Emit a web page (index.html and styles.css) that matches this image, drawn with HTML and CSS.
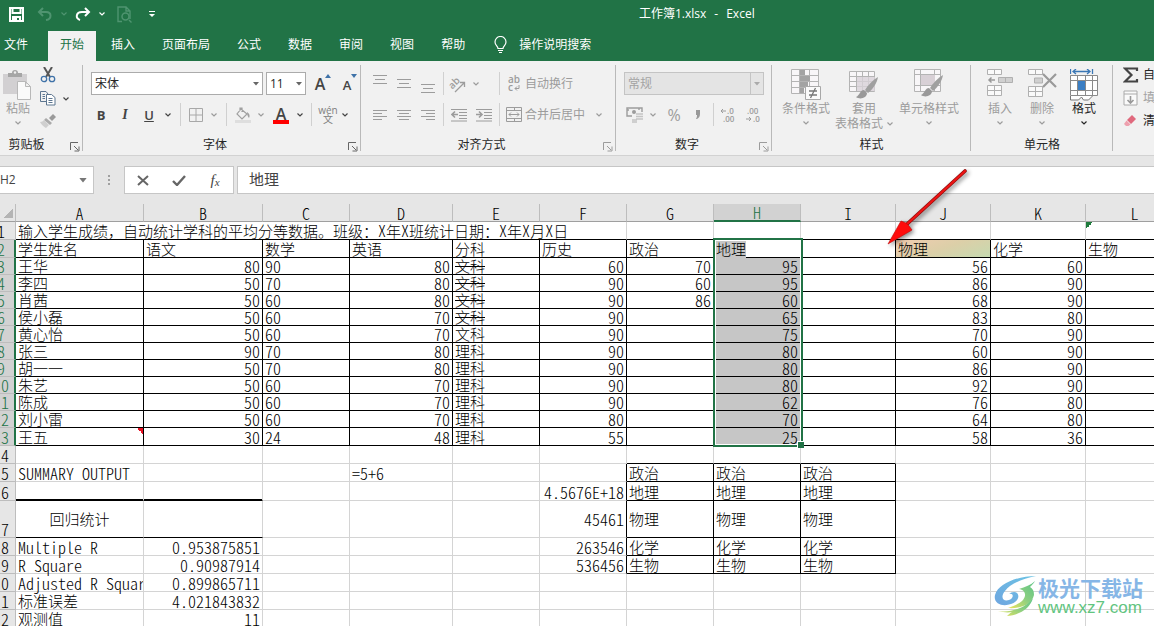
FILE: index.html
```html
<!DOCTYPE html>
<html lang="zh-CN">
<head>
<meta charset="utf-8">
<meta name="viewport" content="width=device-width, initial-scale=1">
<title>工作簿1.xlsx - Excel</title>
<link rel="stylesheet" href="styles.css">
</head>
<body>
<svg class="defs" width="0" height="0" aria-hidden="true">
  <symbol id="chev" viewBox="0 0 6 4"><path d="M.5 .5 3 3 5.500 .5" fill="none" stroke="currentColor" stroke-width="1.200"/></symbol>
  <symbol id="tri" viewBox="0 0 6 4"><path d="M0 0h6L3 3.500z" fill="currentColor"/></symbol>
  <symbol id="launch" viewBox="0 0 10 10"><path d="M.5 8V.5H8M4 4l4 4M9 4.500V9H4.500" fill="none" stroke="currentColor"/></symbol>
</svg>

<header class="top">
  <div class="titlebar">
    <div class="quick">
      <button class="w32" aria-label="保存"><svg width="15" height="15" viewBox="0 0 15 15"><path d="M1 1h13v13H1zM3.500 1v5h8V1M4 14v-4h7v4" fill="none" stroke="#fff" stroke-width="2"/><path d="M5 11h3v3H5z" fill="#fff"/></svg></button>
      <button class="w26 dim" aria-label="撤消"><svg width="16" height="14" viewBox="0 0 16 14"><path d="M6 1 2 5l4 4M2 5h7c6 0 6 7 0 8" fill="none" stroke="currentColor" stroke-width="2"/></svg></button>
      <button class="w12 dim" aria-label="撤消列表"><svg width="6" height="4"><use href="#chev"/></svg></button>
      <button class="w26" aria-label="恢复"><svg width="16" height="14" viewBox="0 0 16 14"><path d="M10 1l4 4-4 4M14 5H7C1 5 0 11 5 13" fill="none" stroke="#fff" stroke-width="2"/></svg></button>
      <button class="w12" aria-label="恢复列表"><svg width="6" height="4"><use href="#chev"/></svg></button>
      <button class="w32 dim" aria-label="打印预览"><svg width="15" height="17" viewBox="0 0 15 17"><path d="M5 15.500H1V1h8l4 4v8M9 1v4h4M12 14l2.500 2.500" fill="none" stroke="currentColor" stroke-width="1.400"/><circle cx="8.500" cy="10.500" r="3.500" fill="none" stroke="currentColor" stroke-width="1.500"/></svg></button>
      <button class="w24" aria-label="自定义快速访问工具栏"><svg width="6" height="7" viewBox="0 0 6 7"><path d="M0 .5h6" stroke="#fff"/><path d="M0 3h6L3 6z" fill="#fff"/></svg></button>
    </div>
    <h1 class="doc"><span>工作簿1.xlsx</span><span>-</span><span>Excel</span></h1>
  </div>
  <nav class="tabs">
    <button class="file">文件</button>
    <button class="active">开始</button>
    <button>插入</button>
    <button>页面布局</button>
    <button>公式</button>
    <button>数据</button>
    <button>审阅</button>
    <button>视图</button>
    <button>帮助</button>
    <button class="tell"><svg width="13" height="18" viewBox="0 0 13 18"><path d="M4 12.500c0-2.500-3-3-3-6.500a5.500 5.500 0 0 1 11 0c0 3.500-3 4-3 6.500zM4 14.500h5M5 16.500h3" fill="none" stroke="#fff" stroke-width="1.200"/></svg>操作说明搜索</button>
  </nav>
</header>

<section class="ribbon">
  <div class="group clip">
    <div class="body">
      <button class="big paste off"><svg width="30" height="32" viewBox="0 0 30 32"><path d="M0 5h24v10H14v10H0z" fill="#d2d0d2"/><path d="M5 8V4h4a3 3 0 0 1 6 0h4v4z" fill="#a6a6a6"/><circle cx="12" cy="3.500" r="1.200" fill="#f1f1f1"/><path d="M14.500 12.500h8l5 5v13h-13zM22.500 12.500v5h5" fill="#fafafa" stroke="#b8b8b8"/></svg><span>粘贴</span><svg class="end" width="6" height="4"><use href="#chev"/></svg></button>
      <div class="stack">
        <button aria-label="剪切"><svg width="16" height="16" viewBox="0 0 16 16"><path d="M4 0l6 10M12 0 6 10" stroke="#555" stroke-width="2" fill="none"/><circle cx="4" cy="12" r="2.700" fill="none" stroke="#3f72a8" stroke-width="1.300"/><circle cx="12" cy="12" r="2.700" fill="none" stroke="#3f72a8" stroke-width="1.300"/></svg></button>
        <button aria-label="复制"><svg width="16" height="15" viewBox="0 0 16 15"><path d="M6 10.500H.5V.5H6L8 3M2.500 3.500H5M2.500 5.500H5M2.500 7.500H5" fill="none" stroke="#5d7690"/><path d="M6.500 3.500h5l3.500 3v7.500H6.500zM8.500 7.500h4M8.500 9.500h4M8.500 11.500h4" fill="#fff" stroke="#5d7690"/></svg><svg class="copychev" width="6" height="4"><use href="#chev"/></svg></button>
        <button aria-label="格式刷"><svg width="16" height="14" viewBox="0 0 16 14"><path d="M9 4l4-4 3 3-4 4z" fill="#9a9a9a"/><path d="M6 4l6 5-2 2-6-5z" fill="#aaa"/><path d="M4 6l5 5-3 3c-2-1-5-4-6-6 2 0 3-1 4-2z" fill="#cfcfcf"/></svg></button>
      </div>
    </div>
    <div class="caption"><span>剪贴板</span><button aria-label="剪贴板选项"><svg width="10" height="10"><use href="#launch"/></svg></button></div>
  </div>

  <div class="group font">
    <div class="body rows">
      <div class="row boxes">
        <label class="combo name"><select aria-label="字体"><option>宋体</option></select><svg width="6" height="4"><use href="#tri"/></svg></label>
        <label class="combo size"><select aria-label="字号"><option>11</option></select><svg width="6" height="4"><use href="#tri"/></svg></label>
        <button class="w28 glyph" aria-label="增大字号"><span class="a16">A</span><svg class="sup" width="6" height="4" viewBox="0 0 6 4"><path d="M0 4h6L3 0z" fill="#3f72a8"/></svg></button>
        <button class="w20 glyph" aria-label="减小字号"><span class="a13">A</span><svg class="sup" width="6" height="4" viewBox="0 0 6 4"><path d="M0 0h6L3 4z" fill="#3f72a8"/></svg></button>
      </div>
      <div class="row">
        <button class="w24 bold">B</button><button class="w24 ital">I</button><button class="w24 under">U</button><button class="w14" aria-label="下划线列表"><svg width="6" height="4"><use href="#chev"/></svg></button>
        <i class="sep w10"></i>
        <button class="w22 off" aria-label="边框"><svg width="14" height="14" viewBox="0 0 14 14"><path d="M.5 .5h13v13H.5zM7 0v14M0 7h14" fill="none" stroke="#a8a8a8"/></svg></button><button class="w14 off" aria-label="边框列表"><svg width="6" height="4"><use href="#chev"/></svg></button>
        <i class="sep w10"></i>
        <button class="w24 off" aria-label="填充颜色"><svg width="16" height="16" viewBox="0 0 16 16"><path d="M6 2l6 5-5 5-5-5zM5 4V1h2v4" fill="none" stroke="#a0a0a0" stroke-width="1.200"/><path d="M12 5c3 2 3 4 2 6-1-1-2-3-2-6z" fill="#a0a0a0"/><path d="M0 13h16v3H0z" fill="#dedede"/></svg></button><button class="w12 off" aria-label="填充列表"><svg width="6" height="4"><use href="#chev"/></svg></button>
        <button class="w28 color" aria-label="字体颜色">A</button><button class="w10" aria-label="字体颜色列表"><svg width="6" height="4"><use href="#chev"/></svg></button>
        <i class="sep w12"></i>
        <button class="w22 wen"><span>wén</span><span>文</span></button><button class="w12" aria-label="拼音列表"><svg width="6" height="4"><use href="#chev"/></svg></button>
      </div>
    </div>
    <div class="caption"><span>字体</span><button aria-label="字体设置"><svg width="10" height="10"><use href="#launch"/></svg></button></div>
  </div>

  <div class="group align off">
    <div class="body rows">
      <div class="row boxes">
        <button class="w24" aria-label="顶端对齐"><svg width="14" height="20" viewBox="0 0 14 20"><path d="M0 1.500h14M2 5.500h10M0 9.500h14" stroke="currentColor"/></svg></button><button class="w24" aria-label="垂直居中"><svg width="14" height="20" viewBox="0 0 14 20"><path d="M0 5.500h14M2 9.500h10M0 13.500h14" stroke="currentColor"/></svg></button><button class="w24" aria-label="底端对齐"><svg width="14" height="20" viewBox="0 0 14 20"><path d="M0 10.500h14M2 14.500h10M0 18.500h14" stroke="currentColor"/></svg></button>
        <i class="sep w6"></i>
        <button class="w24" aria-label="方向"><svg width="18" height="18" viewBox="0 0 18 18"><text x="0" y="11" transform="rotate(-45 6 9)" class="ab">ab</text><path d="M6 17 15 8M11 7.500h4.500V12" fill="none" stroke="currentColor" stroke-width="1.300"/></svg></button><button class="w12" aria-label="方向列表"><svg width="6" height="4"><use href="#chev"/></svg></button>
        <i class="w14"></i><i class="sep w6"></i>
        <button class="cmd"><svg width="16" height="20" viewBox="0 0 16 20"><text x="2" y="9" class="ab">ab</text><text x="2" y="17" class="ab">c</text><path d="M13 11v3.500H9M11 12.500l-2 2 2 2" fill="none" stroke="currentColor"/></svg>自动换行</button>
      </div>
      <div class="row">
        <button class="w24" aria-label="左对齐"><svg width="14" height="14" viewBox="0 0 14 14"><path d="M0 2.500h14M0 5.500h9M0 8.500h14M0 11.500h9" stroke="currentColor"/></svg></button><button class="w24" aria-label="居中"><svg width="14" height="14" viewBox="0 0 14 14"><path d="M0 2.500h14M2 5.500h10M0 8.500h14M2 11.500h10" stroke="currentColor"/></svg></button><button class="w24" aria-label="右对齐"><svg width="14" height="14" viewBox="0 0 14 14"><path d="M0 2.500h14M5 5.500h9M0 8.500h14M5 11.500h9" stroke="currentColor"/></svg></button>
        <i class="sep w6"></i>
        <button class="w26" aria-label="减少缩进"><svg width="16" height="14" viewBox="0 0 16 14"><path d="M0 1.500h16M8 4.500h8M8 7.500h8M8 10.500h8M0 13h16" stroke="currentColor"/><path d="M7 6.500H1M4 3.500l-3 3 3 3" fill="none" stroke="currentColor" stroke-width="1.600"/></svg></button><button class="w24" aria-label="增加缩进"><svg width="16" height="14" viewBox="0 0 16 14"><path d="M0 1.500h16M8 4.500h8M8 7.500h8M8 10.500h8M0 13h16" stroke="currentColor"/><path d="M0 6.500h6M3 3.500l3 3-3 3" fill="none" stroke="currentColor" stroke-width="1.600"/></svg></button>
        <i class="sep w6"></i>
        <button class="cmd"><svg width="16" height="16" viewBox="0 0 16 16"><path d="M.5 .5h15v14H.5zM.5 3.500h15M.5 11.500h15M8.500 .5v3M8.500 11.500v3M3 7.500h10M5 5.500l-2 2 2 2M11 5.500l2 2-2 2" fill="none" stroke="currentColor"/></svg>合并后居中</button><button class="w28" aria-label="合并列表"><svg width="6" height="4"><use href="#chev"/></svg></button>
      </div>
    </div>
    <div class="caption"><span>对齐方式</span><button aria-label="对齐设置"><svg width="10" height="10"><use href="#launch"/></svg></button></div>
  </div>

  <div class="group number off">
    <div class="body rows">
      <div class="row boxes">
        <label class="combo format"><select aria-label="数字格式" disabled><option>常规</option></select><svg width="6" height="4"><use href="#tri"/></svg></label>
      </div>
      <div class="row">
        <button class="w22" aria-label="会计数字格式"><svg width="18" height="16" viewBox="0 0 18 16"><path d="M6 9H1V1h15v4M1 3h2M13 1v2" fill="none" stroke="currentColor" stroke-width="1.400"/><circle cx="8" cy="5" r="2" fill="currentColor"/><path d="M10 7h7M10 9.500h7M10 12h7M6 13h5M6 15h5" stroke="#c4c4c4" stroke-width="1.500"/></svg></button><button class="w14" aria-label="货币列表"><svg width="6" height="4"><use href="#chev"/></svg></button>
        <button class="w28 pct">%</button><button class="w20 comma" aria-label="千位分隔"><svg width="6" height="9" viewBox="0 0 6 9"><path d="M1 0h4v4c0 2-1 4-3 5H1c1-2 1-3 1-4H1z" fill="#999"/></svg></button>
        <i class="sep w10"></i>
        <button class="w20" aria-label="增加小数位数"><svg width="16" height="16" viewBox="0 0 16 16"><path d="M6 4H1M3 2 1 4l2 2" fill="none" stroke="currentColor"/><text x="7" y="7" class="dec">.0</text><text x="3" y="15" class="dec">.00</text></svg></button><button class="w30" aria-label="减少小数位数"><svg width="16" height="16" viewBox="0 0 16 16"><text x="2" y="7" class="dec">.00</text><path d="M1 12h5M4 10l2 2-2 2" fill="none" stroke="currentColor"/><text x="8" y="15" class="dec">.0</text></svg></button>
      </div>
    </div>
    <div class="caption"><span>数字</span><button aria-label="数字设置"><svg width="10" height="10"><use href="#launch"/></svg></button></div>
  </div>

  <div class="group styles off">
    <div class="body">
      <button class="big w52"><svg width="30" height="32" viewBox="0 0 30 32"><path d="M.5 .5h27v24H.5zM.5 6.500h27M.5 12.500h27M.5 18.500h27M8.500 .5v24M18.500 .5v24" fill="#f8f6f8" stroke="#b4b4b4"/><path d="M9 1h5v5H9zM9 7h10v5H9zM9 13h8v5H9zM9 19h4v5H9z" fill="#a3a3a3"/><path d="M14.500 17.500h15v13h-15z" fill="#fafafa" stroke="#a8a8a8"/><path d="M18 22h8M18 26h8M24.500 19l-5 10" stroke="#777" stroke-width="1.300"/></svg><span>条件格式</span><svg class="end" width="6" height="4"><use href="#chev"/></svg></button>
      <button class="big w64"><svg width="30" height="32" viewBox="0 0 30 32"><path d="M.5 2.500h25v20H.5zM.5 7.500h25M.5 12.500h25M.5 17.500h25M7.500 2.500v20M13.500 2.500v20M19.500 2.500v20" fill="#f8f6f8" stroke="#b4b4b4"/><path d="M8 8h18v14H8z" fill="#d8d2d8" opacity=".8"/><path d="M29 8c-5 3-10 8-13 13l3 3c5-4 9-10 10-16z" fill="#a0a0a0"/><path d="M15 21c-4 0-4 5-8 7 4 3 11 1 11-4z" fill="#999"/></svg><span>套用</span><span class="pair">表格格式<svg width="6" height="4"><use href="#chev"/></svg></span></button>
      <button class="big w66"><svg width="30" height="32" viewBox="0 0 30 32"><path d="M.5 .5h26v22H.5zM.5 5.500h26M.5 16.500h26M6.500 .5v22M20.500 .5v22" fill="#f8f6f8" stroke="#b4b4b4"/><path d="M7 6h14v10H7z" fill="#d8d0d6"/><path d="M29 6c-5 3-10 8-13 13l3 3c5-4 9-10 10-16z" fill="#a0a0a0"/><path d="M15 19c-4 0-4 5-8 7 4 3 11 1 11-4z" fill="#999"/></svg><span>单元格样式</span><svg class="end" width="6" height="4"><use href="#chev"/></svg></button>
    </div>
    <div class="caption"><span>样式</span></div>
  </div>

  <div class="group cells">
    <div class="body">
      <button class="big w42 off"><svg width="28" height="32" viewBox="0 0 28 32"><path d="M1.500 .5h14v5h-14zM8.500 .5v5M1.500 16.500h14v10h-14zM8.500 16.500v10M1.500 21.500h14" fill="#fafafa" stroke="#b0b0b0"/><path d="M12.500 8.500h14v5h-14zM19.500 8.500v5" fill="#d0d0d0" stroke="#b0b0b0"/><path d="M9 11H3M5.500 8.500 3 11l2.500 2.500" fill="none" stroke="#999" stroke-width="1.500"/></svg><span>插入</span><svg class="end" width="6" height="4"><use href="#chev"/></svg></button>
      <button class="big w42 off"><svg width="30" height="32" viewBox="0 0 30 32"><path d="M1.500 .5h14v5h-14zM8.500 .5v5M1.500 17.500h14v10h-14zM8.500 17.500v10M1.500 22.500h14" fill="#fafafa" stroke="#b0b0b0"/><path d="M7.500 9h8v5h-8z" fill="#d0d0d0" stroke="#b0b0b0"/><path d="M16 5l13 13M29 5 16 18" stroke="#9a9a9a" stroke-width="2.200"/></svg><span>删除</span><svg class="end" width="6" height="4"><use href="#chev"/></svg></button>
      <button class="big w42"><svg width="28" height="32" viewBox="0 0 28 32"><path d="M.5 0v5M22.500 0v5M3 2.500h17M6 0 3 2.500 6 5M17 0l3 2.500L17 5" fill="none" stroke="#3b77b5" stroke-width="1.300"/><path d="M.5 6.500h27v20H.5zM.5 11.500h27M.5 21.500h27M7.500 6.500v20M15.500 6.500v20M22.500 6.500v20" fill="#fff" stroke="#8a8a8a"/><path d="M8 12h7v9H8z" fill="#3b7fc4"/><path d="M.5 27v4h8l3-3 2 3h5l4-4" fill="#fff" stroke="#777"/></svg><span>格式</span><svg class="end" width="6" height="4"><use href="#chev"/></svg></button>
    </div>
    <div class="caption"><span>单元格</span></div>
  </div>

  <div class="group edit">
    <button><svg width="16" height="16" viewBox="0 0 16 16"><path d="M14 4V1.500H2L8.500 8 2 14.500h12V12" fill="none" stroke="#444" stroke-width="2.200"/></svg>自</button>
    <button class="off"><svg width="16" height="16" viewBox="0 0 16 16"><path d="M1 1h13v14H1zM1 4h13" fill="#fafafa" stroke="#aaa"/><path d="M7.500 6v7M4.500 10l3 3 3-3" fill="none" stroke="#999" stroke-width="1.600"/></svg>填</button>
    <button><svg width="16" height="16" viewBox="0 0 16 16"><path d="M9 2l4 4-5 5-4-4z" fill="#e0697d"/><path d="M3.500 7.500l4 4-2 1.500H3L1 11z" fill="#eea0ae"/></svg>清</button>
  </div>
</section>

<section class="formula">
  <div class="namebox"><input aria-label="名称框" value="H2"><svg width="8" height="5" viewBox="0 0 6 4"><use href="#tri"/></svg></div>
  <span class="grip"></span>
  <div class="fxbox">
    <button aria-label="取消"><svg width="12" height="11" viewBox="0 0 12 11"><path d="M1 1l10 9M11 1 1 10" stroke="#666" stroke-width="2"/></svg></button>
    <button aria-label="输入"><svg width="14" height="11" viewBox="0 0 14 11"><path d="M1 6l4 4L13 1" fill="none" stroke="#666" stroke-width="2.400"/></svg></button>
    <button class="fx" aria-label="插入函数">f<small>x</small></button>
  </div>
  <input class="entry" aria-label="编辑栏" value="地理">
</section>

<main class="sheet">
<table>
<colgroup><col class="c0"><col class="ca"><col class="cb"><col class="cs"><col class="cd"><col class="cs"><col class="cs"><col class="cs"><col class="cs"><col class="cm"><col class="cm"><col class="cm"><col class="cl"></colgroup>
<thead><tr><th class="corner"></th><th>A</th><th>B</th><th>C</th><th>D</th><th>E</th><th>F</th><th>G</th><th class="on">H</th><th>I</th><th>J</th><th>K</th><th>L</th></tr></thead>
<tbody>
<tr class="title"><th>1</th><td colspan="6">输入学生成绩，自动统计学科的平均分等数据。班级：<b>X</b>年<b>X</b>班统计日期：<b>X</b>年<b>X</b>月<b>X</b>日</td><td></td><td></td><td></td><td></td><td></td><td class="flag"></td></tr>
<tr class="data r18"><th>2</th><td>学生姓名</td><td>语文</td><td>数学</td><td>英语</td><td>分科</td><td>历史</td><td>政治</td><td class="cursor"><mark>地理</mark><span class="selection"></span></td><td></td><td class="tint">物理</td><td>化学</td><td>生物</td></tr>
<tr class="data"><th>3</th><td>王华</td><td class="n">80</td><td class="t">90</td><td class="n">80</td><td><s>文科</s></td><td class="n">60</td><td class="n">70</td><td class="n sel">95</td><td></td><td class="n">56</td><td class="n">60</td><td></td></tr>
<tr class="data"><th>4</th><td>李四</td><td class="n">50</td><td class="t">70</td><td class="n">80</td><td><s>文科</s></td><td class="n">90</td><td class="n">60</td><td class="n sel">95</td><td></td><td class="n">86</td><td class="n">90</td><td></td></tr>
<tr class="data"><th>5</th><td>肖茜</td><td class="n">50</td><td class="t">60</td><td class="n">80</td><td><s>文科</s></td><td class="n">90</td><td class="n">86</td><td class="n sel">60</td><td></td><td class="n">68</td><td class="n">90</td><td></td></tr>
<tr class="data"><th>6</th><td>侯小磊</td><td class="n">50</td><td class="t">60</td><td class="n">70</td><td><s>文科</s></td><td class="n">90</td><td></td><td class="n sel">65</td><td></td><td class="n">83</td><td class="n">80</td><td></td></tr>
<tr class="data"><th>7</th><td>黄心怡</td><td class="n">50</td><td class="t">60</td><td class="n">70</td><td>文科</td><td class="n">90</td><td></td><td class="n sel">75</td><td></td><td class="n">70</td><td class="n">90</td><td></td></tr>
<tr class="data"><th>8</th><td>张三</td><td class="n">90</td><td class="t">70</td><td class="n">80</td><td>理科</td><td class="n">90</td><td></td><td class="n sel">80</td><td></td><td class="n">60</td><td class="n">90</td><td></td></tr>
<tr class="data"><th>9</th><td>胡一一</td><td class="n">50</td><td class="t">70</td><td class="n">80</td><td>理科</td><td class="n">90</td><td></td><td class="n sel">80</td><td></td><td class="n">86</td><td class="n">90</td><td></td></tr>
<tr class="data two"><th>0</th><td>朱艺</td><td class="n">50</td><td class="t">60</td><td class="n">70</td><td>理科</td><td class="n">90</td><td></td><td class="n sel">80</td><td></td><td class="n">92</td><td class="n">90</td><td></td></tr>
<tr class="data two"><th>1</th><td>陈成</td><td class="n">50</td><td class="t">60</td><td class="n">70</td><td>理科</td><td class="n">90</td><td></td><td class="n sel">62</td><td></td><td class="n">76</td><td class="n">80</td><td></td></tr>
<tr class="data two"><th>2</th><td>刘小雷</td><td class="n">50</td><td class="t">60</td><td class="n">70</td><td>理科</td><td class="n">80</td><td></td><td class="n sel">70</td><td></td><td class="n">64</td><td class="n">80</td><td></td></tr>
<tr class="data two r18"><th>3</th><td class="note">王五</td><td class="n">30</td><td class="t">24</td><td class="n">48</td><td>理科</td><td class="n">55</td><td></td><td class="n sel">25</td><td></td><td class="n">58</td><td class="n">36</td><td></td></tr>
<tr class="two r18"><th>4</th><td></td><td></td><td></td><td></td><td></td><td></td><td class="bb"></td><td class="bb"></td><td class="bb"></td><td></td><td></td><td></td></tr>
<tr class="two r18"><th>5</th><td class="t">SUMMARY OUTPUT</td><td></td><td></td><td class="t">=5+6</td><td></td><td class="br"></td><td class="box">政治</td><td class="box">政治</td><td class="box">政治</td><td></td><td></td><td></td></tr>
<tr class="two r19"><th>6</th><td class="thick"></td><td class="thick"></td><td></td><td></td><td></td><td class="n br">4.5676E+18</td><td class="box">地理</td><td class="box">地理</td><td class="box">地理</td><td></td><td></td><td></td></tr>
<tr class="two r37"><th>7</th><td class="bb center">回归统计</td><td class="bb"></td><td></td><td></td><td></td><td class="n br">45461</td><td class="box">物理</td><td class="box">物理</td><td class="box">物理</td><td></td><td></td><td></td></tr>
<tr class="two r18"><th>8</th><td class="t">Multiple R</td><td class="n">0.953875851</td><td></td><td></td><td></td><td class="n br">263546</td><td class="box">化学</td><td class="box">化学</td><td class="box">化学</td><td></td><td></td><td></td></tr>
<tr class="two r18"><th>9</th><td class="t">R Square</td><td class="n">0.90987914</td><td></td><td></td><td></td><td class="n br">536456</td><td class="box">生物</td><td class="box">生物</td><td class="box">生物</td><td></td><td></td><td></td></tr>
<tr class="two r18"><th>0</th><td class="t cut">Adjusted R Square</td><td class="n">0.899865711</td><td></td><td></td><td></td><td></td><td></td><td></td><td></td><td></td><td></td><td></td></tr>
<tr class="two r18"><th>1</th><td>标准误差</td><td class="n">4.021843832</td><td></td><td></td><td></td><td></td><td></td><td></td><td></td><td></td><td></td><td></td></tr>
<tr class="two r18"><th>2</th><td>观测值</td><td class="n">11</td><td></td><td></td><td></td><td></td><td></td><td></td><td></td><td></td><td></td><td></td></tr>
</tbody>
</table>
</main>

<svg class="arrow" width="90" height="84" viewBox="0 0 90 84" aria-hidden="true">
  <path d="M81 4 22 58" stroke="#8f0c0c" stroke-width="3.600" stroke-linecap="round"/>
  <path d="M81 4 22 58" stroke="#ee1414" stroke-width="2.200" stroke-linecap="round"/>
  <path d="M4 77 17 54l5 2 3 3 3 4z" fill="#ff0d0d" stroke="#c00808" stroke-width=".6"/>
</svg>

<aside class="brand">
  <svg width="44" height="42" viewBox="0 0 44 42" aria-hidden="true">
    <defs><linearGradient id="blue" x1="0" y1="1" x2="1" y2="0"><stop offset="0" stop-color="#6fa6e0"/><stop offset="1" stop-color="#6cc4e4"/></linearGradient><linearGradient id="green" x1="0" y1="1" x2="1" y2="0"><stop offset="0" stop-color="#ece45e"/><stop offset=".5" stop-color="#8ccf80"/><stop offset="1" stop-color="#5ec486"/></linearGradient></defs>
    <path d="M42 1C23 1 4 9 1 20c-2 9 8 12 16 9 7-2 9-8 6-11-2-2-6-1-8 1 5-1 5 4 0 6-6 2-9-3-4-9C16 9 28 4 42 1z" fill="url(#blue)"/>
    <path d="M41 6c-4 4-10 6-16 8 6 1 8 6 4 11-4 4-9 6-15 8 13 1 24-4 26-13 0-4-1-6-4-8 2-2 4-4 5-6z" fill="url(#green)"/>
    <path d="M4 36c14 2 29-4 35-13-3 11-14 17-26 18 2-2 3-3 5-4-5 1-9 0-14-1z" fill="url(#green)"/>
  </svg>
  <div><strong>极光下载站</strong><em>www.xz7.com</em></div>
</aside>
</body>
</html>
```

FILE: styles.css
```css
* { box-sizing: border-box; }

body {
  margin: 0;
  min-height: 100vh;
  position: relative;
  overflow: hidden;
  background: #fff;
  color: #262626;
  font: 12px/16px "Open Sans", "Noto Sans CJK SC", sans-serif;
}

.defs { display: block; position: absolute; }

button {
  display: flex;
  align-items: center;
  justify-content: center;
  flex: none;
  padding: 0;
  border: 0;
  background: none;
  color: #444;
  font: inherit;
  white-space: nowrap;
}

svg { display: block; flex: none; }

.w6 { width: 6px; }
.w10 { width: 10px; }
.w12 { width: 12px; }
.w14 { width: 14px; }
.w20 { width: 20px; }
.w22 { width: 22px; }
.w24 { width: 24px; }
.w26 { width: 26px; }
.w28 { width: 28px; }
.w30 { width: 30px; }
.w32 { width: 32px; }
.w42 { width: 42px; }
.w52 { width: 52px; }
.w64 { width: 64px; }
.w66 { width: 66px; }

/* Title bar and tabs */
.top { background: #217346; color: #fff; }
.top button { color: #fff; }
.titlebar { display: flex; height: 31px; }
.quick { display: flex; align-items: center; flex: 0 0 639px; height: 28px; }
.quick .dim { color: #4f9470; }
.doc { display: flex; gap: 8px; margin: 0; font-size: 12px; font-weight: 400; line-height: 28px; }

.tabs { display: flex; gap: 3px; height: 30px; }
.tabs button { padding: 0 12px 2px; line-height: 28px; }
.tabs .file { padding-left: 4px; margin-right: 5px; }
.tabs .active { background: #f1f1f1; color: #217346; }
.tabs .tell { gap: 12px; padding-left: 14px; }

/* Ribbon */
.ribbon {
  display: flex;
  height: 95px;
  background: #f1f1f1;
  border-bottom: 1px solid #d2d2d2;
  overflow: hidden;
}
.group {
  position: relative;
  display: flex;
  flex-direction: column;
  flex: none;
}
.group::after {
  content: "";
  position: absolute;
  right: 0;
  top: 4px;
  bottom: 4px;
  width: 1px;
  background: #b9b9b9;
}
.body { display: flex; height: 73px; }
.rows { flex-direction: column; padding-top: 11px; gap: 8px; }
.row { display: flex; align-items: center; height: 23px; }
.caption { display: flex; height: 21px; align-items: center; padding-right: 3px; color: #262626; }
.caption span { flex: 1; text-align: center; }
.caption button { width: 11px; height: 14px; align-self: flex-end; color: #666; margin-bottom: 1px; }
.off button, button.off, .off .caption button { color: #9c9c9c; }

.sep { align-self: stretch; display: flex; justify-content: center; }
.sep::before { content: ""; width: 1px; background: #d0d0d0; }

.clip { width: 83px; }
.clip .caption span { padding-right: 16px; }
.font { width: 278px; }
.align { width: 255px; }
.number { width: 156px; }
.styles { width: 199px; }
.cells { width: 142px; }
.edit { flex: 1; }
.font .row { padding-left: 6px; }
.font .boxes { padding-left: 8px; gap: 3px; }
.align .row { padding-left: 7px; }
.number .row { padding-left: 8px; }
.styles .body, .cells .body { padding-left: 8px; }
.styles .caption, .cells .caption { padding-right: 0; }

.big {
  position: relative;
  flex-direction: column;
  justify-content: flex-start;
  padding-top: 8px;
  color: #262626;
}
.big span { line-height: 15px; }
.big .end { position: absolute; bottom: 9px; }
.pair { display: flex; align-items: center; gap: 4px; }
.paste { width: 36px; }
.stack { display: flex; flex-direction: column; justify-content: space-between; padding: 6px 0 6px 4px; }
.stack button { justify-content: flex-start; gap: 7px; }

.combo { position: relative; display: flex; height: 23px; color: #666; }
.combo select {
  width: 100%;
  height: 23px;
  padding: 0 3px;
  appearance: none;
  border: 1px solid #ababab;
  border-radius: 0;
  background: #fff;
  color: #262626;
  font: inherit;
}
.combo svg { position: absolute; right: 4px; top: 10px; }
.combo.name { width: 172px; }
.combo.size { width: 40px; }
.combo.format { width: 140px; color: #aaa; }
.combo.format select { background: #e4e4e4; border-color: #c4c4c4; color: #a3a3a3; opacity: 1; }
.combo.format::after { content: ""; position: absolute; right: 13px; top: 0; bottom: 0; width: 1px; background: #c4c4c4; }

.glyph { align-items: flex-end; font-weight: 600; height: 20px; }
.glyph .sup { align-self: flex-start; }
.a16 { font-size: 16px; line-height: 20px; }
.a13 { font-size: 13px; line-height: 18px; }
.bold { font-weight: 700; font-size: 13px; }
.ital { font: italic 700 14px/16px "Liberation Serif", serif; }
.under { font-weight: 600; font-size: 13px; text-decoration: underline; }
.color { font-size: 16px; font-weight: 600; height: 18px; line-height: 15px; }
.color::before { content: ""; position: absolute; width: 16px; height: 4px; margin-top: 15px; background: #f00; }
.wen { flex-direction: column; color: #808080; font-size: 10px; line-height: 9px; }
.pct { font-size: 16px; }
.cmd { gap: 3px; padding-left: 4px; }
.ab { font: 600 10px "Open Sans", sans-serif; fill: currentColor; }
.dec { font: 600 8px "Open Sans", sans-serif; fill: currentColor; }

.edit { align-items: flex-start; padding: 6px 0 0 10px; gap: 7px; overflow: hidden; }
.edit::after { display: none; }
.edit button { gap: 4px; height: 16px; color: #262626; }
.edit .off { color: #a3a3a3; }

/* Formula bar */
.formula {
  display: flex;
  height: 48px;
  padding: 10px 0;
  background: #e6e6e6;
}
.formula input { border: 0; background: none; padding: 0; min-width: 0; color: #444; font: inherit; outline: 0; }
.namebox { display: flex; align-items: center; width: 94px; padding-right: 6px; background: #fff; border: 1px solid #c6c6c6; border-left: 0; color: #777; }
.namebox input { flex: 1; }
.grip { width: 30px; display: flex; justify-content: center; align-items: center; }
.grip::before { content: ""; width: 2px; height: 10px; background: repeating-linear-gradient(#a0a0a0 0 2px, transparent 2px 4px); }
.fxbox { display: flex; width: 110px; background: #fff; border: 1px solid #c6c6c6; }
.fxbox button { flex: 1; }
.fx { font: italic 400 15px/18px "Liberation Serif", serif; }
.fx small { font-size: 11px; padding-top: 4px; }
.formula .entry { flex: 1; margin-left: 3px; padding: 0 11px 2px; background: #fff; border: 1px solid #c6c6c6; border-right: 0; font-size: 15px; }

/* Worksheet */
.sheet { overflow: hidden; }
table { table-layout: fixed; width: 1183px; border-collapse: separate; border-spacing: 0; }
.c0 { width: 16px; }
.ca { width: 128px; }
.cb { width: 119px; }
.cs { width: 87px; }
.cd { width: 103px; }
.cm { width: 95px; }
.cl { width: 98px; }

td, th {
  height: 17px;
  padding: 0 2px;
  border: 0 solid #d4d4d4;
  border-width: 0 1px 1px 0;
  white-space: nowrap;
  vertical-align: bottom;
  color: #000;
  font: 300 15px/16px "Noto Sans CJK SC", sans-serif;
}
th {
  background: #e6e6e6;
  border-color: #bdbdbd;
  font-size: 16px;
  font-feature-settings: "hwid" 1;
}
thead th { height: 18px; border-bottom-color: #9f9f9f; }
thead .on { background: #d2d2d2; color: #217346; border-bottom: 2px solid #217346; line-height: 15px; }
.corner { background: linear-gradient(135deg, transparent 50%, #b4b4b4 50%) 3px 4px / 10px 10px no-repeat #e6e6e6; }
tbody th { padding: 0; text-align: left; text-indent: -3px; }
.two th { text-indent: 1px; }
.title td, .title th, .r18 td, .r18 th { height: 18px; }
.r19 td, .r19 th { height: 19px; }
.r37 td, .r37 th { height: 37px; }
.r37 td { vertical-align: middle; }
.title td { border-bottom-color: #000; }
b, .n, .t { font-size: 16px; font-weight: 300; font-feature-settings: "hwid" 1; }
.n { text-align: right; }
.center { text-align: center; }
.cut { overflow-x: clip; }
s { text-decoration-thickness: 1px; }

.data td { border-color: #000; }
.data th { background: #d2d2d2; color: #217346; border-right: 2px solid #217346; }
.data .sel { background: #c6c6c6; }
.tint { background: linear-gradient(160deg, #f0ccb0, #dccfa8 50%, #c6dab0); }
.box { border-color: #000; }
.bb { border-bottom-color: #000; }
.br { border-right-color: #000; }
.thick { border-bottom-color: #000; box-shadow: inset 0 -1px #000; }
.note { background: linear-gradient(45deg, transparent 50%, #e81123 50%) right top / 6px 6px no-repeat; }
.flag { background: linear-gradient(135deg, #1e7b3c 50%, transparent 50%) left top / 7px 7px no-repeat; }

.cursor { position: relative; }
mark { background: #c6c6c6; color: inherit; }
.selection {
  position: absolute;
  left: -1px;
  top: -2px;
  width: 90px;
  height: 209px;
  border: 2px solid #217346;
  box-shadow: inset 0 0 0 1px #fff;
}
.selection::after {
  content: "";
  position: absolute;
  right: -3px;
  bottom: -3px;
  width: 6px;
  height: 6px;
  background: #217346;
  border: 1px solid #fff;
  border-width: 1px 0 0 1px;
}

.arrow { position: absolute; left: 884px; top: 167px; filter: drop-shadow(2px 2px 2px rgba(0, 0, 0, .45)); }

.brand {
  position: absolute;
  right: 11px;
  top: 575px;
  display: flex;
  align-items: center;
}
.brand div { display: flex; flex-direction: column; }
.brand strong { color: #86b6e6; font: 700 21px/24px "Noto Sans CJK SC", sans-serif; }
.brand em { color: #62c47f; font: 400 17px/18px "Liberation Sans", sans-serif; }
```
